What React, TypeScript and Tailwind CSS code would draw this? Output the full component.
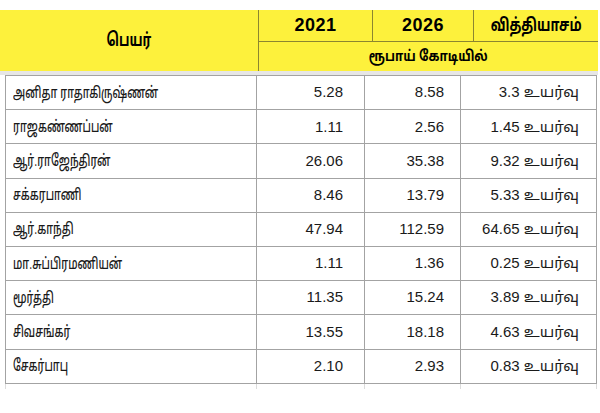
import React from 'react';

type Row = {
  name: string;
  y2021: string;
  y2026: string;
  diff: string;
};

const rows: Row[] = [
  { name: 'அனிதா ராதாகிருஷ்ணன்', y2021: '5.28', y2026: '8.58', diff: '3.3 உயர்வு' },
  { name: 'ராஜகண்ணப்பன்', y2021: '1.11', y2026: '2.56', diff: '1.45 உயர்வு' },
  { name: 'ஆர்.ராஜேந்திரன்', y2021: '26.06', y2026: '35.38', diff: '9.32 உயர்வு' },
  { name: 'சக்கரபாணி', y2021: '8.46', y2026: '13.79', diff: '5.33 உயர்வு' },
  { name: 'ஆர்.காந்தி', y2021: '47.94', y2026: '112.59', diff: '64.65 உயர்வு' },
  { name: 'மா.சுப்பிரமணியன்', y2021: '1.11', y2026: '1.36', diff: '0.25 உயர்வு' },
  { name: 'மூர்த்தி', y2021: '11.35', y2026: '15.24', diff: '3.89 உயர்வு' },
  { name: 'சிவசங்கர்', y2021: '13.55', y2026: '18.18', diff: '4.63 உயர்வு' },
  { name: 'சேகர்பாபு', y2021: '2.10', y2026: '2.93', diff: '0.83 உயர்வு' },
];

export default function App() {
  return (
    <div className="w-[600px] h-[413px] bg-white pt-[10px] font-['Liberation_Sans','Noto_Sans_Tamil','Lohit_Tamil','Latha',sans-serif] text-[#1a1a1a]">
      {/* Header */}
      <div className="grid w-[598px] grid-cols-[259px_114px_101px_124px] grid-rows-[32px_29px] bg-[#fdf13c] font-bold text-black">
        <div className="row-span-2 flex items-center justify-center border-r border-[#8c8530]">
          <span className="inline-block scale-x-[0.7] text-[18px]">பெயர்</span>
        </div>
        <div className="flex items-center justify-center border-r border-b border-[#8c8530] text-[18px] tracking-[0.5px]">
          2021
        </div>
        <div className="flex items-center justify-center border-r border-b border-[#8c8530] text-[18px] tracking-[0.5px]">
          2026
        </div>
        <div className="flex items-center justify-center border-b border-[#8c8530]">
          <span className="inline-block scale-x-[0.72] whitespace-nowrap text-[18px]">வித்தியாசம்</span>
        </div>
        <div className="col-span-3 flex items-center justify-center">
          <span className="inline-block scale-x-[0.8] whitespace-nowrap text-[15px]">ரூபாய் கோடியில்</span>
        </div>
      </div>

      <div className="h-[4px] w-[598px] bg-[#e6e6e6]" />

      {/* Body */}
      <div className="ml-[5px] w-[592px] border-t border-[#a3a3a3] text-[15px]">
        {rows.map((r) => (
          <div
            key={r.name}
            className="grid h-[34.2px] grid-cols-[252px_108px_96px_136px] border-b border-[#a3a3a3]"
          >
            <div className="flex items-center border-l border-r border-[#a3a3a3] pl-[7px]">
              <span className="inline-block origin-left scale-x-[0.66] whitespace-nowrap text-[16px] font-medium">
                {r.name}
              </span>
            </div>
            <div className="flex items-center justify-end border-r border-[#a3a3a3] pr-[21px]">{r.y2021}</div>
            <div className="flex items-center justify-end border-r border-[#a3a3a3] pr-[16px]">{r.y2026}</div>
            <div className="flex items-center justify-end border-r border-[#a3a3a3] pr-[17px]">{r.diff}</div>
          </div>
        ))}
        <div className="grid h-[5px] grid-cols-[252px_108px_96px_136px]">
          <div className="border-l border-r border-[#dcdcdc]" />
          <div className="border-r border-[#dcdcdc]" />
          <div className="border-r border-[#dcdcdc]" />
          <div className="border-r border-[#dcdcdc]" />
        </div>
      </div>
    </div>
  );
}
